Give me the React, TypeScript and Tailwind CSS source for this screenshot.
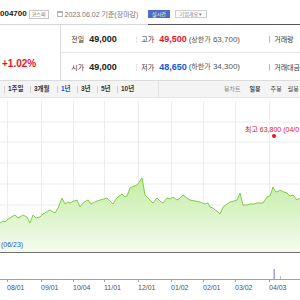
import React from 'react';

const pts: [number, number][] = [
  [0, 223], [3, 221], [5, 222], [8, 219], [10, 218], [13, 216], [15, 215], [18, 218], [20, 217], [23, 215],
  [27, 217], [30, 223], [33, 215], [36, 218], [40, 217], [43, 214], [45, 213], [48, 211], [50, 210], [53, 212],
  [55, 213], [58, 208], [60, 203], [62, 198], [65, 204], [68, 202], [70, 203], [74, 201], [77, 200], [80, 207],
  [83, 203], [86, 201], [88, 200], [91, 204], [93, 203], [97, 201], [100, 200], [104, 199], [107, 198], [110, 201],
  [113, 204], [116, 199], [118, 197], [122, 194], [125, 197], [127, 196], [130, 188], [134, 186], [137, 185], [140, 181],
  [142, 178], [145, 195], [148, 198], [150, 200], [153, 203], [157, 198], [160, 201], [163, 203], [167, 198], [170, 199],
  [173, 197], [177, 200], [180, 198], [183, 195], [187, 198], [190, 200], [195, 201], [200, 202], [205, 204], [208, 203],
  [210, 207], [213, 208], [215, 210], [218, 212], [220, 214], [223, 207], [227, 204], [230, 202], [234, 201], [237, 200],
  [240, 193], [243, 205], [247, 205], [250, 204], [254, 204], [257, 203], [260, 203], [263, 203], [267, 197], [270, 196],
  [273, 187], [275, 191], [277, 192], [280, 190], [284, 192], [287, 193], [290, 196], [293, 195], [297, 200], [300, 198],
];

const linePath = pts.map(([x, y], i) => `${i ? 'L' : 'M'}${x},${y}`).join(' ');
const areaPath = `M0,252 ${pts.map(([x, y]) => `L${x},${y}`).join(' ')} L300,252 Z`;

const vGrid = [7, 41, 73, 104, 138, 171, 203, 235, 269];
const hGrid = [122, 142, 163, 184, 205, 225];
const ticks = [
  { x: 7, label: '08/01' },
  { x: 41, label: '09/01' },
  { x: 73, label: '10/04' },
  { x: 104, label: '11/01' },
  { x: 138, label: '12/01' },
  { x: 171, label: '01/02' },
  { x: 203, label: '02/01' },
  { x: 235, label: '03/02' },
  { x: 269, label: '04/03' },
];

const periods = [
  { label: '1주일', w: 'w-[26px]' },
  { label: '3개월', w: 'w-[27px]' },
  { label: '1년', w: 'w-[20px]', active: true },
  { label: '3년', w: 'w-[20px]' },
  { label: '5년', w: 'w-[20px]' },
  { label: '10년', w: 'w-[30px]' },
];

const Sep = ({ color = 'bg-[#d0d0d0]' }: { color?: string }) => <span className={`w-px h-[7px] ${color}`} />;

const App: React.FC = () => {
  return (
    <div className="w-[300px] h-[300px] overflow-hidden bg-white font-['Liberation_Sans','Noto_Sans_CJK_KR',sans-serif] text-[#333]">
      {/* title row */}
      <div className="flex h-[25px]">
        <div className="flex w-[148px] items-center pt-[4px] border-b border-[#d6d6d6]">
          <span className="text-[8px] font-bold text-[#222] leading-none">004700</span>
          <span className="ml-[2px] flex h-[9px] items-center border border-[#c8c8c8] px-[2px] text-[5px] leading-none text-[#555]">코스피</span>
          <svg className="ml-[8px]" width="6" height="6" viewBox="0 0 6 6">
            <rect x="0.5" y="0.5" width="5" height="5" fill="none" stroke="#b5b5b5" strokeWidth="1" />
            <rect x="0.5" y="0.5" width="5" height="1.5" fill="#b5b5b5" />
          </svg>
          <span className="ml-[2px] text-[7px] leading-none text-[#777] whitespace-nowrap">2023.06.02 기준(장마감)</span>
        </div>
        <div className="flex flex-1 items-center pt-[4px] border-b border-[#555]">
          <span className="flex h-[8px] w-[22px] items-center justify-center bg-[#4b6ec2] text-[5px] leading-none text-white">실시간</span>
          <span className="ml-[5px] flex h-[8px] w-[32px] items-center justify-center border border-[#cfcfcf] text-[5px] leading-none text-[#777]">기업개요 ▾</span>
        </div>
      </div>

      {/* price info */}
      <div className="flex h-[56px] border-b border-[#dcdcdc]">
        <div className="flex w-[70px] flex-col justify-end border-r border-[#dcdcdc] pb-[11px] pl-[2px]">
          <span className="text-[10px] font-semibold leading-none text-[#e0161f]">+1.02%</span>
        </div>
        <div className="flex flex-1 flex-col">
          <div className="flex h-[28px] items-center border-b border-[#e6e6e6] pt-[2px]">
            <div className="flex w-[75px] items-center pl-[10px]">
              <span className="text-[7px] leading-none">전일</span>
              <span className="ml-[5px] text-[9px] font-bold leading-none text-[#222]">49,000</span>
            </div>
            <Sep color="bg-[#e6e6e6]" />
            <div className="flex w-[132px] items-center pl-[4px] whitespace-nowrap">
              <span className="text-[7px] leading-none">고가</span>
              <span className="ml-[5px] text-[9px] font-bold leading-none text-[#e0161f]">49,500</span>
              <span className="ml-[2px] text-[8px] leading-none text-[#555]">
                (<span className="text-[7px]">상한가</span> 63,700)
              </span>
            </div>
            <Sep color="bg-[#bdbdbd]" />
            <span className="ml-[4px] text-[7px] leading-none whitespace-nowrap">거래량</span>
          </div>
          <div className="flex flex-1 items-center pt-[1px]">
            <div className="flex w-[75px] items-center pl-[10px]">
              <span className="text-[7px] leading-none">시가</span>
              <span className="ml-[5px] text-[9px] font-bold leading-none text-[#222]">49,000</span>
            </div>
            <Sep color="bg-[#e6e6e6]" />
            <div className="flex w-[132px] items-center pl-[4px] whitespace-nowrap">
              <span className="text-[7px] leading-none">저가</span>
              <span className="ml-[5px] text-[9px] font-bold leading-none text-[#1a57d1]">48,650</span>
              <span className="ml-[2px] text-[8px] leading-none text-[#555]">
                (<span className="text-[7px]">하한가</span> 34,300)
              </span>
            </div>
            <Sep color="bg-[#bdbdbd]" />
            <span className="ml-[4px] text-[7px] leading-none whitespace-nowrap">거래대금</span>
          </div>
        </div>
      </div>

      {/* period tabs */}
      <div className="flex h-[17px] items-center bg-[#f4f4f4] border-b border-[#e4e4e4]">
        <div className="flex w-[158px] items-center pl-[4px]">
          {periods.map((p) => (
            <div key={p.label} className={`flex items-center ${p.w}`}>
              <Sep />
              <span
                className={`ml-[3px] text-[6.5px] leading-none whitespace-nowrap ${
                  p.active ? 'font-bold text-[#2452c4]' : 'font-bold text-[#333]'
                }`}
              >
                {p.label}
              </span>
            </div>
          ))}
        </div>
        <span className="h-full w-px bg-[#e2e2e2]" />
        <div className="flex items-center pl-[65px] whitespace-nowrap">
          <span className="text-[6px] leading-none text-[#888]">봉차트</span>
          <span className="ml-[9px] text-[6px] font-bold leading-none text-[#444]">일봉</span>
          <span className="ml-[3px]"><Sep /></span>
          <span className="ml-[7px] text-[6px] leading-none text-[#444]">주봉</span>
          <span className="ml-[2px]"><Sep /></span>
          <span className="ml-[4px] text-[6px] leading-none text-[#444]">월봉</span>
        </div>
      </div>

      {/* chart */}
      <svg width="300" height="202" viewBox="0 98 300 202" className="block">
        <defs>
          <linearGradient id="fillG" x1="0" y1="178" x2="0" y2="252" gradientUnits="userSpaceOnUse">
            <stop offset="0" stopColor="#c4eda4" />
            <stop offset="1" stopColor="#f4fbef" />
          </linearGradient>
        </defs>
        {hGrid.map((y) => (
          <line key={y} x1="0" x2="300" y1={y} y2={y} stroke="#ececec" strokeWidth="1" />
        ))}
        {vGrid.map((x) => (
          <line key={x} x1={x + 0.5} x2={x + 0.5} y1="101" y2="252" stroke="#ececec" strokeWidth="1" />
        ))}
        <path d={areaPath} fill="url(#fillG)" />
        <path d={linePath} fill="none" stroke="#7fcc4c" strokeWidth="1" strokeLinejoin="round" />
        <line x1="0" x2="300" y1="252.5" y2="252.5" stroke="#707070" strokeWidth="1" />

        <text x="245" y="131.5" fontSize="7" fill="#e0161f" fontFamily="Liberation Sans, Noto Sans CJK KR, sans-serif">
          최고 63,800 (04/0
        </text>
        <circle cx="274" cy="136" r="2" fill="#e0161f" />
        <text x="1" y="246.5" fontSize="7" fill="#2a5bd0" fontFamily="Liberation Sans, sans-serif">
          (06/23)
        </text>

        <rect x="273.5" y="269" width="1.5" height="10" fill="#a89cdb" />
        <rect x="280" y="276" width="1" height="3" fill="#bbbbbb" />

        <line x1="0" x2="300" y1="279.5" y2="279.5" stroke="#a0a0a0" strokeWidth="1" />
        {ticks.map((t) => (
          <g key={t.label}>
            <line x1={t.x + 0.5} x2={t.x + 0.5} y1="279" y2="282" stroke="#a0a0a0" strokeWidth="1" />
            <text x={t.x} y="290" fontSize="7" fill="#4a5364" fontFamily="Liberation Sans, sans-serif">
              {t.label}
            </text>
          </g>
        ))}
      </svg>
    </div>
  );
};

export default App;
